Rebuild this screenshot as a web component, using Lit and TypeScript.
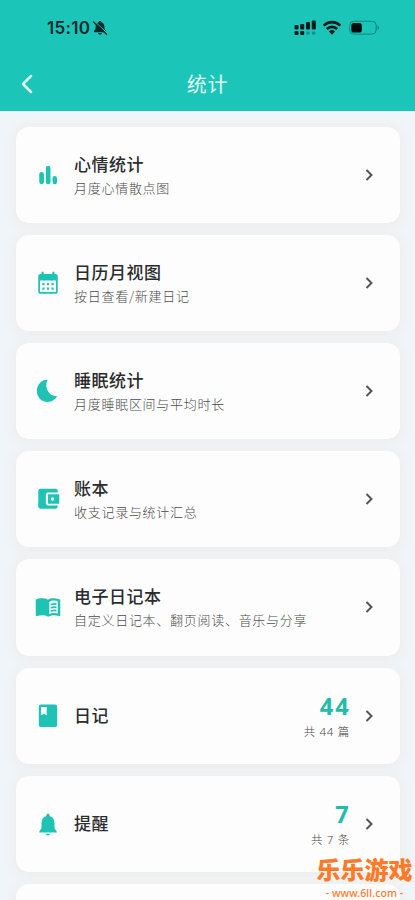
import { LitElement, html, css, svg, nothing } from "lit";
import { customElement, property } from "lit/decorators.js";

const icons: Record<string, unknown> = {
  chart: svg`<rect x="3.9" y="9.3" width="4.4" height="11.2" rx="2.2"/><rect x="10" y="3.500" width="4.3" height="17" rx="2.15"/><rect x="16.2" y="13" width="4.1" height="7.5" rx="2"/>`,
  calendar: svg`<path fill-rule="evenodd" d="M19 3.600h-1V1.500h-2v2.100H8V1.500H6v2.100H5c-1.200 0-2 .9-2 2v14.400c0 1.100.9 2 2 2h14c1.100 0 2-.9 2-2V5.600c0-1.100-.9-2-2-2zm.4 16.800H4.600V9.800h14.800v10.600zM6.800 12h2v2h-2zm4.200 0h2v2h-2zm4.200 0h2v2h-2zM6.800 16.200h2v2h-2zm4.200 0h2v2h-2zm4.200 0h2v2h-2z"/>`,
  moon: svg`<path d="M11.7 1.700C7 1 1.700 5.600 1.700 11.900c0 5.800 4.500 10.200 10 10.200 3.8 0 7.1-2.1 8.8-5.400-3 .3-6.200-.9-8.100-3.700-2.400-3.500-2.700-7.600-.7-11.300z"/>`,
  wallet: svg`<path d="M21 18v1c0 1.100-.9 2-2 2H5c-1.110 0-2-.9-2-2V4.500c0-1.100.89-2 2-2h14c1.100 0 2 .9 2 2V6h-9c-1.110 0-2 .9-2 2v8c0 1.100.89 2 2 2h9z"/><path fill-rule="evenodd" d="M12 7.600h10.400v8.800H12zM16.200 10.400a1.600 1.600 0 1 0 0 3.200 1.600 1.600 0 0 0 0-3.200z"/>`,
  book: svg`<path fill-rule="evenodd" d="M21 4.400c-1.110-.35-2.330-.5-3.500-.5-1.950 0-4.050.4-5.500 1.500-1.450-1.100-3.550-1.500-5.500-1.500S2.100 4.200.7 5.400v14.200c0 .6.5 1 1.200.8 1.500-.6 3-.8 4.600-.8 1.950 0 4.050.4 5.500 1.500 1.350-.85 3.800-1.500 5.500-1.500 1.600 0 3 .2 4.600.8.700.2 1.200-.2 1.200-.8V5.400c-.6-.45-1.550-.75-2.300-1zm0 13.700c-1.100-.35-2.300-.5-3.500-.5-1.500 0-3.100.4-4.300 1V7.300c1.350-.85 2.600-1.300 4.300-1.300 1.200 0 2.400.15 3.500.5z"/><path d="M14.500 9q2.600-.9 5.300-.4v1.500q-2.700-.5-5.300.4zm0 3q2.600-.9 5.300-.4v1.500q-2.700-.5-5.300.4zm0 3q2.600-.9 5.300-.4v1.500q-2.700-.5-5.300.4z"/>`,
  diary: svg`<path fill-rule="evenodd" d="M18.500 1.300h-13C4.300 1.300 3.500 2.100 3.500 3.200v17c0 1.100.9 1.900 2 1.900h13c1.100 0 2-.8 2-1.900v-17c0-1.100-.9-1.900-2-1.900zM5.500 3.600h5.300v7.900L8.200 9.800l-2.700 1.700z"/>`,
  bell: svg`<path d="M12 22.500c1.100 0 2-.7 2-1.500h-4c0 .8.900 1.500 2 1.500zm6-6.500v-5c0-3.100-1.600-5.600-4.500-6.300V4c0-.8-.7-1.800-1.500-1.800s-1.500 1-1.500 1.800v.7C7.600 5.400 6 7.900 6 11v5l-2 3v.8h16V19l-2-3z"/>`,
};

@customElement("stat-card")
class StatCard extends LitElement {
  @property() icon = "";
  @property() heading = "";
  @property() sub = "";
  @property() count = "";
  @property() unit = "";

  static styles = css`
    :host {
      display: flex;
      align-items: center;
      box-sizing: border-box;
      height: 96.12px;
      flex: none;
      padding: 0 26px 0 19px;
      border-radius: 13px;
      background: #fdfdfd;
      box-shadow: 0 2px 8px 4px #eeeeee;
    }
    .icon { width: 26px; height: 26px; flex: none; fill: #1fc3b4; }
    .text { flex: 1; margin: -1px 0 0 13px; white-space: nowrap; }
    .heading { font-size: 17px; line-height: 24px; letter-spacing: 0.5px; font-weight: 500; color: #2b2c2e; }
    .sub { font-size: 13px; line-height: 20px; margin-top: 2px; letter-spacing: 0.72px; font-weight: 300; color: #4c4c4c; }
    .numbers { text-align: right; white-space: nowrap; margin-right: 16px; }
    .count {
      font: 700 23.5px/28px "Noto Sans", sans-serif;
      letter-spacing: 2.2px;
      margin-right: -2px;
      color: #23bbaa;
    }
    .unit { font-family: "Noto Sans", "Noto Sans CJK SC", sans-serif; font-size: 11.5px; line-height: 16px; margin-top: 4px; letter-spacing: 0.7px; font-weight: 300; color: #484848; margin-right: -1px; }
    .arrow { width: 9px; height: 14px; flex: none; fill: none; stroke: #555; stroke-width: 2; }
  `;

  render() {
    return html`
      <svg class="icon" viewBox="0 0 24 24">${icons[this.icon]}</svg>
      <div class="text">
        <div class="heading">${this.heading}</div>
        ${this.sub ? html`<div class="sub">${this.sub}</div>` : nothing}
      </div>
      ${this.count
        ? html`<div class="numbers"><div class="count">${this.count}</div><div class="unit">${this.unit}</div></div>`
        : nothing}
      <svg class="arrow" viewBox="0 0 9 14"><path d="M1.500 2 6.500 7l-5 5"/></svg>
    `;
  }
}

const items = [
  { icon: "chart", heading: "心情统计", sub: "月度心情散点图" },
  { icon: "calendar", heading: "日历月视图", sub: "按日查看/新建日记" },
  { icon: "moon", heading: "睡眠统计", sub: "月度睡眠区间与平均时长" },
  { icon: "wallet", heading: "账本", sub: "收支记录与统计汇总" },
  { icon: "book", heading: "电子日记本", sub: "自定义日记本、翻页阅读、音乐与分享" },
  { icon: "diary", heading: "日记", count: "44", unit: "共 44 篇" },
  { icon: "bell", heading: "提醒", count: "7", unit: "共 7 条" },
  { icon: "", heading: "" },
];

@customElement("app-root")
class AppRoot extends LitElement {
  static styles = css`
    :host {
      display: flex;
      flex-direction: column;
      position: relative;
      height: 900px;
      overflow: hidden;
      background: #f0f5f9;
      font-family: "Noto Sans CJK SC", sans-serif;
    }
    .top { height: 111px; flex: none; background: #1bc6b9; display: flex; flex-direction: column; position: relative; }
    .status { height: 56px; display: flex; align-items: center; padding: 0 35px 0 47px; box-sizing: border-box; }
    .time { font: 600 17px/20px Inter, sans-serif; letter-spacing: 0.3px; color: #07292a; }
    .mute { width: 16px; height: 16px; margin-left: 2px; }
    .signals { margin-left: auto; display: flex; align-items: center; }
    .cell { width: 22px; height: 16px; }
    .wifi { width: 20px; height: 16px; margin-left: 6px; }
    .battery { width: 31px; height: 16px; margin-left: 7px; }
    .nav { height: 55px; display: grid; grid-template-columns: 50px 1fr 50px; align-items: center; }
    .back { width: 14px; height: 20px; margin-left: 20px; fill: none; stroke: #e2fbf8; stroke-width: 2.500; stroke-linecap: round; stroke-linejoin: round; }
    .title { text-align: center; font-size: 20px; line-height: 28px; letter-spacing: 0.8px; color: #e2fbf8; font-weight: 400; }
    .list { display: flex; flex-direction: column; gap: 12px; padding: 16px 15px 0 16px; }
    .mark { position: absolute; left: 316px; top: 854px; width: 97px; text-align: center; color: #ff7a26; white-space: nowrap; }
    .mark-name { font-size: 24px; line-height: 29px; font-weight: 900; }
    .mark-url { font: 500 10.5px/14px "Noto Sans", sans-serif; letter-spacing: 0.1px; margin-top: 3px; }
  `;

  render() {
    return html`
      <div class="top">
        <div class="status">
          <span class="time">15:10</span>
          <svg class="mute" viewBox="0 0 16 16">
            <path fill="#07292a" d="M8 1c-.9 0-1.300.5-1.400 1.200C4.400 2.900 3.600 4.600 3.600 6.800c0 2.300-.6 3-1.500 4-.6.7-.2 1.400.5 1.400h10.800c.7 0 1.100-.7.5-1.400-.9-1-1.500-1.700-1.500-4 0-2.200-.8-3.900-3-4.600C9.300 1.500 8.900 1 8 1zM6 13h4c-.2 1-1 1.600-2 1.600S6.200 14 6 13z"/>
            <path stroke="#1bc6b9" stroke-width="1" d="M2.400 1.200 15.400 13.200"/>
            <path stroke="#07292a" stroke-width="1.300" stroke-linecap="round" d="M1.500 2 14.500 14.200"/>
          </svg>
          <div class="signals">
            <svg class="cell" viewBox="0 0 22 16" fill="#07191a">
              <rect x="0.500" y="5" width="4" height="4.500" rx="1"/><rect x="6.200" y="4" width="4" height="5.500" rx="1"/>
              <rect x="12" y="2" width="4" height="7.500" rx="1"/><rect x="17.800" y="0.500" width="4" height="9" rx="1"/>
              <rect x="0.500" y="11" width="4" height="4" rx="1"/><rect x="6.200" y="11" width="4" height="4" rx="1"/>
              <g opacity=".3"><rect x="12.300" y="11.400" width="3.300" height="3.300" rx="1"/><rect x="18" y="11.400" width="3.300" height="3.300" rx="1"/></g>
            </svg>
            <svg class="wifi" viewBox="0 0 20 16" fill="none" stroke="#07191a" stroke-width="2.600">
              <path d="M1.700 5.600a11.700 11.700 0 0 1 16.600 0M4.800 9a7.400 7.400 0 0 1 10.400 0"/>
              <path fill="#07191a" stroke="none" d="M10 14.700 6.900 11.500a4.500 4.500 0 0 1 6.200 0z"/>
            </svg>
            <svg class="battery" viewBox="0 0 31 16">
              <rect x="0.700" y="1.300" width="26.500" height="12.800" rx="4" fill="none" stroke="#0f877f"/>
              <rect x="2.300" y="2.900" width="10.500" height="9.600" rx="2.600" fill="#020a0a"/>
              <path d="M28.500 5.500V10c1-.4 1.600-1.200 1.600-2.250S29.500 5.900 28.500 5.500z" fill="#0f877f"/>
            </svg>
          </div>
        </div>
        <div class="nav">
          <svg class="back" viewBox="0 0 14 20"><path d="M11 2 3 10l8 8"/></svg>
          <div class="title">统计</div>
        </div>
      </div>
      <div class="list">
        ${items.map(
          (i) => html`<stat-card .icon=${i.icon} .heading=${i.heading} .sub=${i.sub ?? ""} .count=${i.count ?? ""} .unit=${i.unit ?? ""}></stat-card>`
        )}
      </div>
      <div class="mark">
        <div class="mark-name">乐乐游戏</div>
        <div class="mark-url">- www.6ll.com -</div>
      </div>
    `;
  }
}
